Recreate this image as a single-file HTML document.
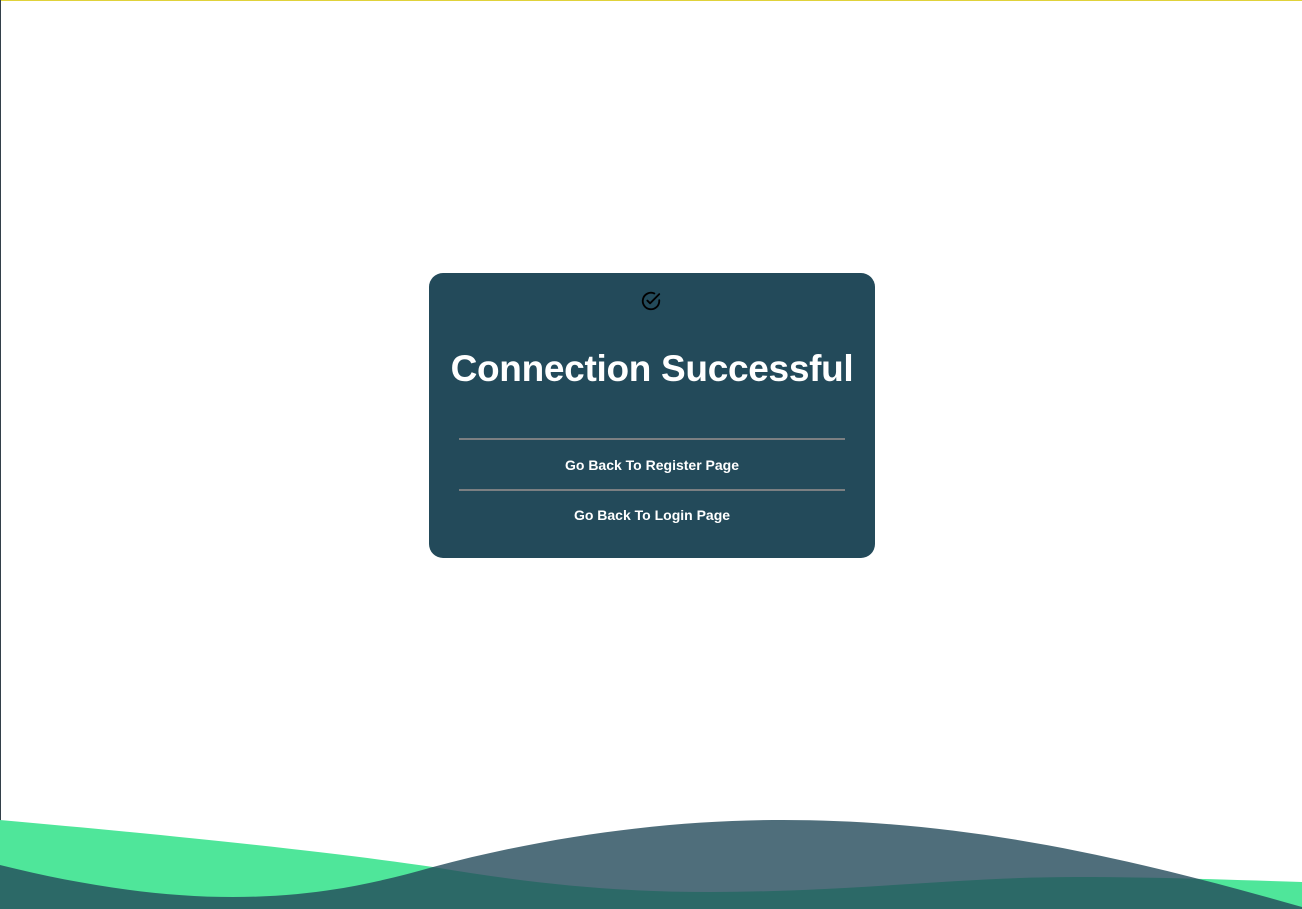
<!DOCTYPE html>
<html><head><meta charset="utf-8"><style>
html,body{margin:0;padding:0;width:1302px;height:909px;overflow:hidden;background:#fff;font-family:"Liberation Sans",sans-serif;}
.top{position:absolute;left:0;top:0;width:1302px;height:1px;background:#e0d23a;}
.left{position:absolute;left:0;top:0;width:1px;height:909px;background:#33404a;}
.card{position:absolute;left:429px;top:273px;width:446px;height:285px;background:#234a5a;border-radius:14px;color:#fff;text-align:center;}
.icon{position:absolute;left:211px;top:17px;}
h1{position:absolute;left:0;width:446px;top:75px;margin:0;font-size:37px;font-weight:bold;letter-spacing:-0.3px;}
.hr{position:absolute;left:30px;width:386px;height:2px;background:#7b7f82;}
.lnk{position:absolute;left:0;width:446px;font-size:14px;font-weight:bold;}
svg.w{position:absolute;left:0;top:0;}
</style></head><body>
<div class="top"></div><div class="left"></div>
<div class="card">
<svg class="icon" width="22" height="22" viewBox="0 0 24 24" fill="none" stroke="#000" stroke-width="2" stroke-linecap="round" stroke-linejoin="round"><path d="M21 11.1V12a9 9 0 1 1-5.3-8.2"/><path d="M8 11.5l3 3L21 4.5"/></svg>
<h1>Connection Successful</h1>
<div class="hr" style="top:165px"></div>
<div class="lnk" style="top:184px">Go Back To Register Page</div>
<div class="hr" style="top:216px"></div>
<div class="lnk" style="top:234px">Go Back To Login Page</div>
</div>
<svg class="w" width="1302" height="909" viewBox="0 0 1302 909">
<path d="M0,820 C180,836 330,852 433,867 C540,885 620,892 710,892 C850,892 960,877 1075,877 C1160,877 1240,880 1302,882 V909 H0 Z" fill="#4fe69a"/>
<path d="M0,865 C80,885 160,897 233,897 C310,897 370,885 433,867 C560,833 680,820 783,820 C960,820 1120,855 1302,907 V909 H0 Z" fill="#234a5a" fill-opacity="0.8"/>
</svg>
</body></html>
